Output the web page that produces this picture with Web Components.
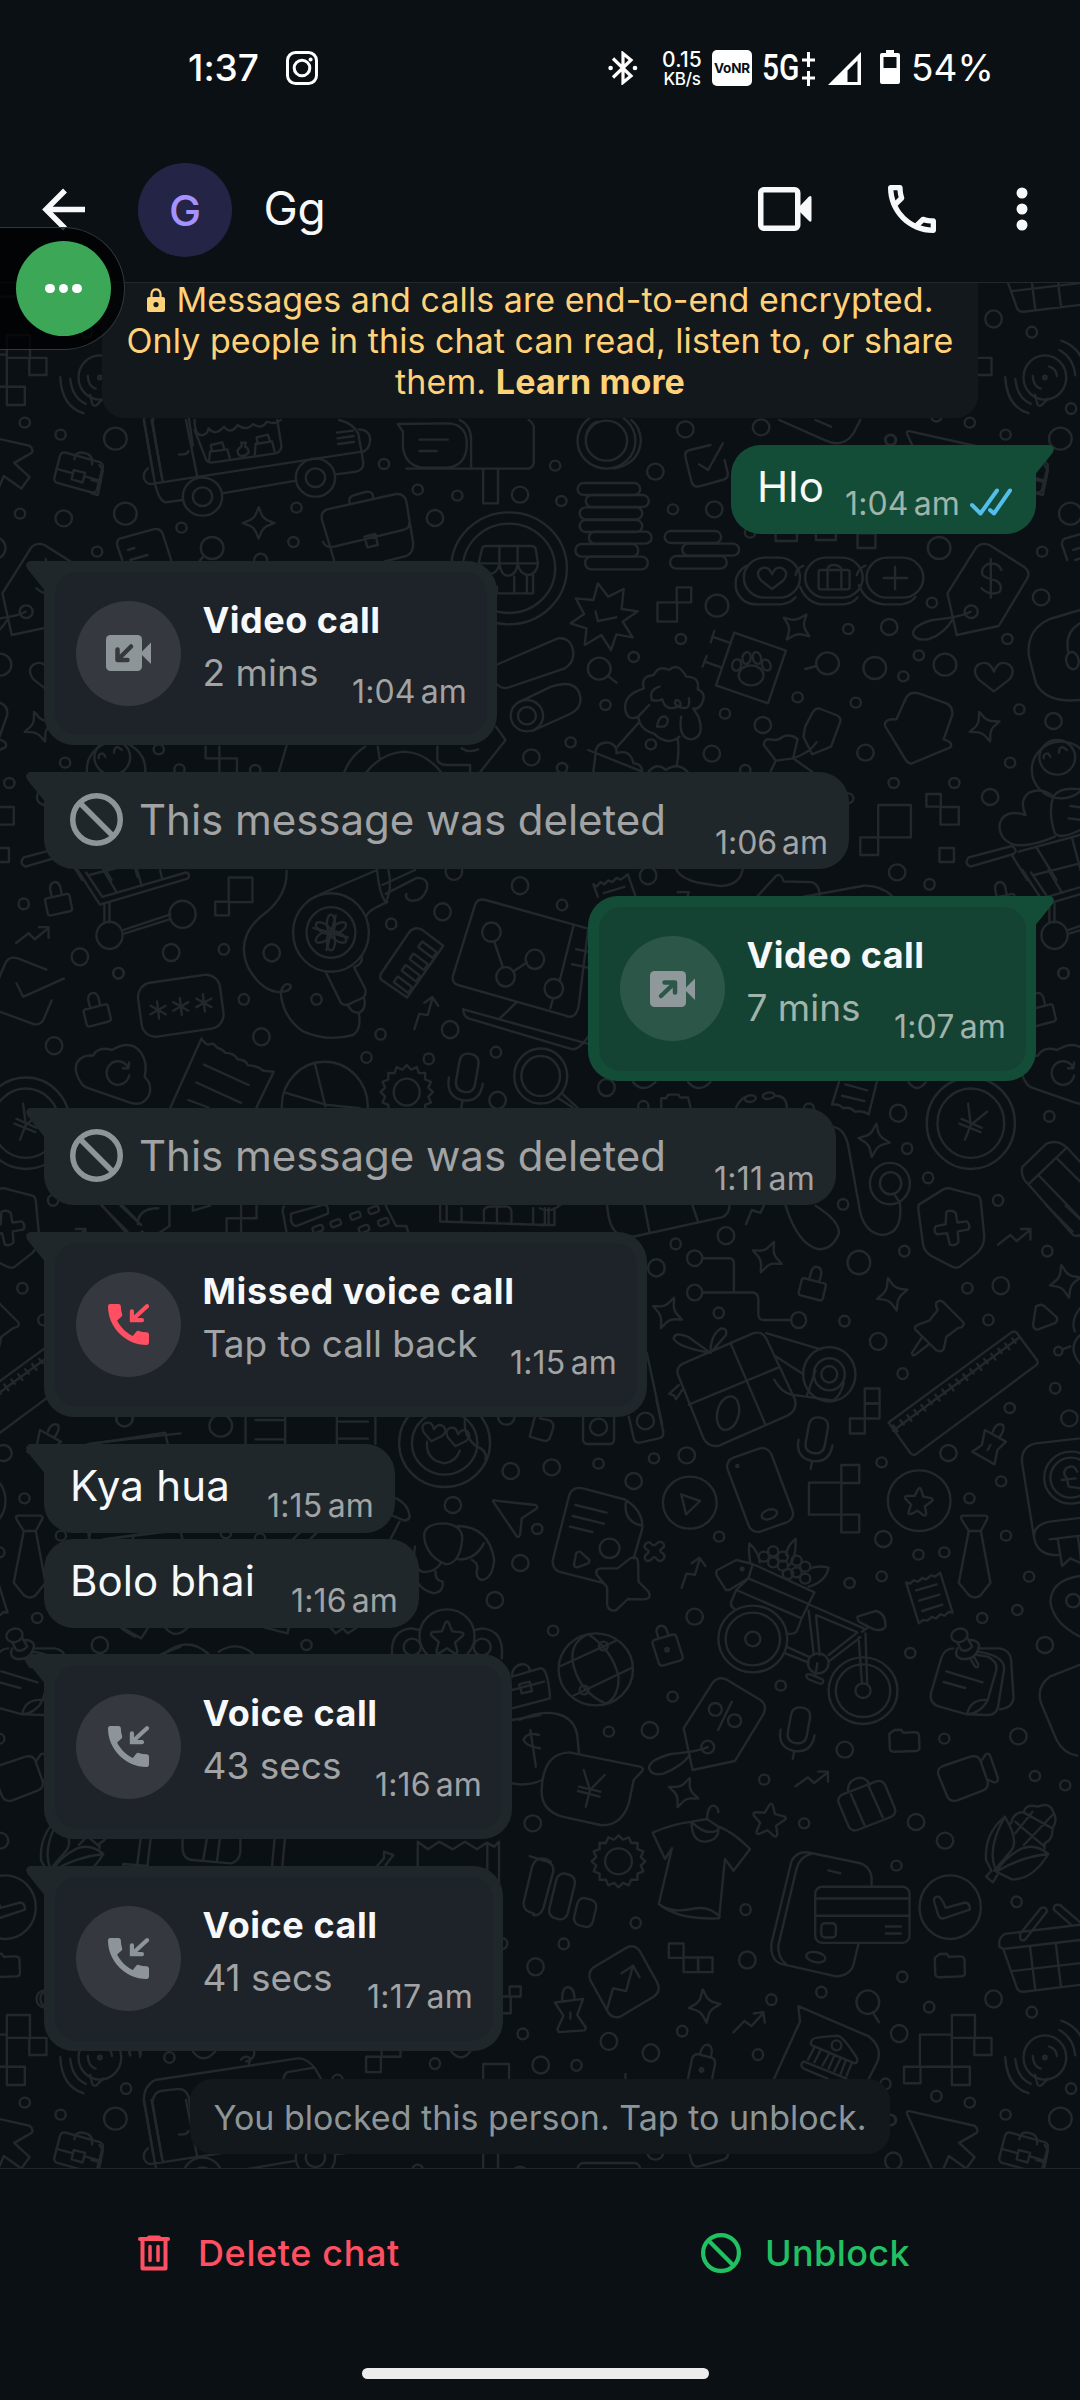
<!DOCTYPE html>
<html lang="en">
<head>
<meta charset="utf-8">
<title>Gg</title>
<style>
html,body{margin:0;padding:0;background:#0b1014}
body{width:1080px;height:2400px;overflow:hidden;font-family:Inter,"Liberation Sans",sans-serif;color:#f7f8fa}
</style>
</head>
<body>
<chat-app></chat-app>
<script>
const SHEET = (css, html) => `<style>:host{box-sizing:border-box}*{box-sizing:border-box}svg{display:block;flex:none}${css}</style>${html}`;
class Base extends HTMLElement {
  connectedCallback() {
    if (this.shadowRoot) return;
    this.attachShadow({mode: 'open'}).innerHTML = this.render();
  }
  a(n, d = '') { return this.getAttribute(n) ?? d; }
}

/* ---------- doodle wallpaper ---------- */
const circles = (r, ...p) => { let s = ''; for (let i = 0; i < p.length; i += 2) s += `<circle cx="${p[i]}" cy="${p[i+1]}" r="${r}"/>`; return s; };
const rects = (...list) => list.map(([x, y, w, h, r = 0]) => `<rect x="${x}" y="${y}" width="${w}" height="${h}" rx="${r}"/>`).join('');
const tilted = (cx, cy, w, h, rx, deg) => `<rect x="${cx - w/2}" y="${cy - h/2}" width="${w}" height="${h}" rx="${rx}" transform="rotate(${deg} ${cx} ${cy})"/>`;
const P = d => `<path d="${d}"/>`;
const oval = (x, y, a, b, deg = 0) => `<ellipse cx="${x}" cy="${y}" rx="${a}" ry="${b}" transform="rotate(${deg} ${x} ${y})"/>`;
const at = (x, y, deg, d) => `<path transform="translate(${x} ${y}) rotate(${deg})" d="${d}"/>`;
const sparkle = (x, y, deg = 0) => at(x, y, deg, 'M0-47Q4-41 6-32Q12-12 34-5L46 0L34 5Q12 12 6 32L0 47L-6 32Q-12 12-34 5L-46 0L-34-5Q-12-12-6-32Z');
const star = (x, y, k = 1, deg = 0) => `<path transform="translate(${x} ${y}) rotate(${deg}) scale(${k})" d="M-5-43Q0-52 5-43L15-18L42-15Q52-12 45-4L23 16L30 40Q30 52 20 47L0 33L-22 47Q-33 50-30 38L-24 14L-45-5Q-50-15-40-16L-15-18Z"/>`;
const heart = (x, y, k = 1, deg = 0) => `<path transform="translate(${x} ${y}) rotate(${deg}) scale(${k})" d="M0 44L-44 9Q-66-20-44-37Q-14-52 0-15Q14-52 42-37Q66-20 44 9Z"/>`;
const lock = (x, y, deg) => at(x, y, deg, 'M-30-14H30Q36-14 36-8V28Q36 35 28 35H-28Q-36 35-36 28V-8Q-36-14-30-14M-15-14V-38Q-12-54 0-54Q12-54 15-38V-14');
const zig = (x, y, deg) => at(x, y, deg, 'M-48 22L-12-5L6 12L46-20M18-22H46V8');
const folder = (x, y) => at(x, y, -2, 'M-43-22L-28-33H-8L-2-24H30Q43-24 43-14V22Q43 32 33 32H-32Q-43 32-43 22Z');
const mic = (x, y, deg) => at(x, y, deg, 'M-28-30Q-28-58 0-58Q28-58 28-30V22Q28 50 0 50Q-28 50-28 22ZM-50 18Q-50 72 0 74Q50 72 50 18M0 74V98');
const gear = (x, y, r) => { let d = ''; const n = 32; for (let i = 0; i <= n; i++) { const t = i / n * Math.PI * 2, q = i % 2 ? r - 6 : r + 6; d += (i ? 'L' : 'M') + (x + Math.cos(t) * q).toFixed(1) + ' ' + (y + Math.sin(t) * q).toFixed(1); } return P(d + 'Z') + circles(r * .54, x, y); };
const ticks = () => { let d = ''; for (let i = 0; i < 18; i++) { const x = 1026 + i * 20.3, y = 1583 - i * 14.3; d += `M${x} ${y}l${i % 2 ? '10 12' : '12 16'}`; } return d; };
const area = (x, y, ky, body) => `<g transform="translate(${x} ${y}) scale(.34439 ${1 / ky})">${body}</g>`;

const TILE =
area(0, 420, 3,
  circles(15, 1115,132, 861,263, 1213,209, 1328,227, 527,323, 852,366, 461,988, 521,1048, 741,1050) +
  circles(24, 1263,294, 1510,224, 1543,1012) + circles(33, 616,384) + circles(19, 757,420) +
  circles(57, 588,230, 916,173) + circles(28, 588,230, 916,173) + circles(168, 1478,445) + circles(134, 1478,445) +
  circles(26, 1530,887) + circles(47, 1530,887) + sparkle(751,309) +
  P('M418 0L450 190Q460 240 480 247L530 240M440 0L473 187M540 0L573 172M450 190L1050 95M645 220L860 182M975 163L1035 155Q1055 150 1055 130L1050 95L1040 40Q1025 10 985 0M565 30L597 115Q600 130 620 127L800 100Q818 95 817 75L805 0M565 0Q565 50 590 45Q605 40 605 25Q625 50 650 20Q670 45 690 15Q715 35 735 12Q760 30 775 5Q800 15 815 0M978 38L1025 32M980 55L1027 48M982 72L1027 66M1042 28Q1075 30 1075 60Q1073 90 1050 97M520 103Q545 105 547 93M430 145Q412 160 420 180Q430 197 448 190M607 122L610 95L660 88L667 113M615 92L612 75L645 67L652 88M740 103L742 72L790 64L797 93M748 70L745 52L778 44L784 64M700 68L714 68M702 70Q704 80 694 85Q685 95 695 106Q710 112 722 98Q722 85 712 80L712 70') +
  P('M935 300Q930 275 950 268L1150 222Q1175 220 1180 245L1200 370Q1200 400 1180 408L1115 425M935 300L970 420M938 365Q945 385 970 380L1170 330Q1190 325 1188 310M1015 250Q1010 230 1030 225L1065 215Q1085 215 1083 232M1058 350L1090 342L1097 375L1067 382Z') +
  P('M1155 12L1305 10Q1350 15 1355 60Q1360 135 1300 143L1225 143Q1175 135 1170 80L1170 35ZM1335 0Q1368 15 1368 60V143M1180 146H1535Q1550 140 1550 125V20Q1545 5 1535 0M1403 146V250H1446V146M1218 59H1300M1218 93H1268M590 410L580 422') +
  P('M1390 430L1400 385Q1402 378 1412 378H1545Q1556 380 1556 390L1562 430ZM1450 378V430M1503 378V430M1390 430Q1400 465 1420 462Q1445 462 1450 430Q1455 467 1475 467Q1500 465 1503 430Q1510 465 1535 465Q1560 460 1562 430M1443 500V520H1548V465M1493 470V520M1530 470V520') +
  P('M1440 735L1620 655Q1660 650 1665 700Q1665 730 1640 745L1475 803Q1455 808 1440 790M1510 845L1600 800Q1675 775 1685 830Q1690 865 1655 882L1545 933M597 980V1015H688V1055M637 980V1055M832 978L810 1055M1000 1055Q1020 1005 1060 980M1065 1055Q1110 998 1175 995Q1235 998 1280 1055M1270 980V1020Q1275 1035 1300 1035H1365V1055M1440 920L1468 960L1395 1055M1340 985Q1360 1000 1388 988M1097 980L1102 1015')) +
area(945, 420, 3,
  circles(24, 185,295) + circles(33, 364,281) + circles(15, 58,281, 176,44, 72,8) +
  P('M340 375Q338 360 350 355L445 328Q465 323 472 340L497 420M340 375L355 420M372 390L390 384M378 420L428 405')) +
area(540, 420, 3,
  circles(33, 1511,56, 1159,384, 514,557, 835,730, 972,744, 1176,734, 172,746) +
  circles(24, 422,28, 642,22, 335,155, 506,268, 1455,532, 1014,621, 647,915, 945,998, 499,1001, 1491,903, 1307,1131, 1037,1357) +
  circles(15, 1017,60, 44,137, 62,243, 386,268, 610,338, 1458,395, 1138,548, 895,627, 409,657, 272,711, 1100,706, 1357,657, 1055,769, 748,832, 917,848, 190,855, 537,881, 89,967, 1392,868, 64,1044, 596,1050, 1365,1028, 1027,1089, 1203,1089, 322,973, 895,1135) +
  circles(60, 193,62) + circles(84, 193,62) + P('M215 146Q290 130 293 60Q290 20 265 0M133 50Q140 15 165 5') +
  rects([109,189,182,36,18],[133,225,183,36,18],[115,262,182,36,18],[115,300,182,36,18],[142,335,182,36,18],[103,372,182,38,18],[131,410,182,38,18],[362,333,164,36,18],[413,371,165,36,18],[378,408,164,38,18]) +
  P('M495 75L435 90Q418 95 422 110L440 185Q445 203 462 199L530 180Q548 175 545 158L536 120M462 133L488 150L531 70') +
  P('M168 490L198 530L243 507L237 567L284 574L240 605L269 652L222 643L206 690L178 645L130 675L135 625L89 610L128 582L104 535L155 540ZM161 574L168 603L221 592') +
  rects([397,502,42,45],[341,547,57,58],[592,413,163,120,60],[770,413,167,120,60],[948,413,165,120,60],[809,450,90,58,6],[982,1155,95,97],[930,1252,52,53],[1122,1122,42,38],[1163,1161,53,53],[1160,1284,42,42],[684,318,62,45],[801,318,58,42],[922,340,52,44]) +
  P('M600 437Q560 460 570 510Q585 553 630 553H700Q728 550 742 532M755 500Q775 550 820 553H880Q910 550 922 532M926 495Q945 548 1000 553H1050Q1080 548 1090 530M835 450V508M875 450V508M835 450Q835 435 853 435Q873 435 875 450M1031 440V508M998 474H1066M742 465Q745 445 765 437M920 465Q925 445 945 437') + heart(674,474,.75) +
  P('M1183 520L1265 385Q1280 365 1305 375L1405 440Q1425 455 1415 475L1332 618L1210 645ZM1250 575Q1225 590 1140 600Q1085 615 1083 640Q1090 665 1130 657Q1175 640 1198 598M1340 450Q1330 425 1300 432Q1278 445 1285 465Q1295 475 1325 482Q1345 495 1335 515Q1310 530 1282 505M1309 417V533') + circles(19, 1252,575) +
  P('M564 638L714 692L662 850L511 796ZM550 668L500 650M506 633L496 667M526 742L478 725M484 708L472 740') + oval(613,766,36,30) + oval(571,735,13,17,15) + oval(600,714,12,18,10) + oval(630,714,12,18,-15) + oval(657,735,12,17,-25) +
  sparkle(745,621,37) + sparkle(1291,920,-20) + heart(1318,770,1) +
  P('M1060 840Q1070 812 1100 820L1180 850Q1200 860 1197 885L1172 958Q1200 965 1192 982L1080 1030Q1070 1033 1062 1020L1002 918Q998 895 1035 898Z') +
  P('M302 805Q290 770 330 765Q345 735 375 750Q400 725 425 770Q465 770 458 808Q485 820 470 850Q460 870 445 865L460 890Q480 950 440 958Q400 955 410 890M302 805Q240 825 248 870Q255 905 285 890L317 855M285 890Q290 930 330 940Q370 980 405 950M347 800Q315 810 325 840Q340 845 355 838Q365 875 400 860Q440 875 432 835M408 860Q385 855 395 840Q410 840 408 860M285 910L225 980M400 955Q405 1000 397 1035M340 920Q345 885 365 890Q380 905 360 920Z') +
  P('M140 990L297 1055M162 995L155 1056M162 990Q170 965 200 968Q225 975 222 1000Q260 985 272 1030Q295 1030 297 1055M315 1055Q340 1025 365 1050Q400 1025 428 1055') +
  P('M770 920L790 880Q800 860 815 867L860 885Q878 893 870 910L845 980L790 1003L765 950ZM685 1022L650 975Q650 955 670 958Q690 965 705 950Q730 940 748 958L735 1015L685 1022L670 1053M735 1015L790 1055M735 1015Q780 1000 803 967') +
  P('M200 770L222 788M803 738L770 747M1568 570L1480 597Q1410 630 1420 710L1440 790Q1470 850 1568 840M1568 610Q1520 640 1535 700') + oval(1546,722,18,26,-10) +
  circles(85, 1513,1050) + circles(52, 1502,1012) + P('M1463 1015Q1460 1000 1475 1000L1482 1010M1507 998Q1507 980 1520 982L1530 990') +
  P('M1380 1275Q1330 1260 1335 1210Q1350 1165 1410 1185Q1390 1140 1420 1118Q1460 1100 1490 1130Q1510 1100 1568 1108M1490 1130Q1475 1180 1495 1240Q1510 1260 1568 1230M1380 1275Q1430 1280 1495 1250M1540 1158L1575 1163M1535 1195L1575 1200') +
  P('M1245 1312L1370 1278Q1390 1290 1375 1302L1250 1340Q1230 1330 1245 1312ZM1370 1305L1415 1380M1390 1295L1568 1245M1440 1280L1500 1380M1545 1255L1575 1370M1435 1365L1568 1330') +
  P('M695 0L830 62Q880 85 910 40L930 0M800 0L845 20M1465 135L1475 150L1460 225L1442 220M1442 180L1468 187')) +
area(945, 860, 2.8,
  P('M225 28L290 125L545 52Q555 40 540 35L297 103L250 35M303 120V175M318 118V175M355 197L495 152M358 207L497 165M300 28L340 92M398 28L412 73M465 28L470 50') + circles(38, 318,211, 530,152) +
  lock(168,115,-12) + lock(280,425,-14) + zig(95,210,0) +
  circles(15, 69,123, 344,317) + circles(24, 232,271, 157,520, 497,259) +
  tilted(525,408,240,152,40,-8) + [[459,420],[525,410],[592,400]].map(([x, y]) => at(x, y, 0, 'M-3-24L3 24M-22-12L22 12M-22 12L22-12')).join('') +
  P('M135 307L50 275Q25 268 15 290L-20 370Q-30 405 0 425L100 460Q120 462 127 445L150 393M48 345L67 383L185 332') +
  P('M240 630Q210 590 225 565Q240 545 270 548Q285 520 325 532Q380 500 410 540Q430 570 420 607Q445 630 432 660Q415 690 380 680L260 640Q248 637 240 630M375 603A33 33 0 1 1 370 578M375 567L373 583L357 583') +
  circles(128, 75,737) + circles(97, 75,737) + P('M67 682L75 742L122 705M75 742L58 783M42 738L103 762M48 725L107 750') +
  P('M295 968L370 1040M350 968L410 1022M492 968V1025L465 1042M400 1020Q400 975 460 975')) +
area(0, 860, 2.8,
  P('M495 692L585 500Q595 515 605 517Q620 510 630 525Q645 530 655 540Q680 540 690 558Q715 560 720 575Q745 575 765 590L795 593L745 692M592 573L722 630M570 623L700 680M547 672L605 693') +
  rects([664,49,69,69],[625,117,40,38]) +
  P('M832 30Q835 95 775 145Q680 210 720 300Q760 370 815 370Q850 365 843 350Q825 340 815 370Q820 440 880 480Q950 510 1025 490Q1050 475 1042 430') +
  circles(110, 961,203) + circles(71, 961,203) + [0,60,120,180,240,300].map(t => `<ellipse cx="961" cy="178" rx="12" ry="25" transform="rotate(${t} 961 203)"/>`).join('') +
  P('M910 190L1010 217M948 252L975 155M925 98L1095 28M1065 155Q1070 140 1125 118M1095 28Q1100 90 1120 120Q1140 80 1128 28M945 312L990 400Q1000 410 1015 403L1055 385Q1065 375 1060 360L1028 300M1010 405Q1020 430 1045 427Q1065 415 1057 385M1030 300Q1055 290 1050 268M1110 70L1205 28M1120 95L1210 50Q1245 50 1240 80Q1225 120 1190 113Q1175 105 1180 95') +
  circles(24, 789,260, 1285,145, 759,495, 1307,475, 1510,72, 1445,673, 1318,32) +
  circles(15, 708,390, 919,390, 1136,179, 650,250, 1105,488, 1064,553, 1245,557, 1440,538) +
  P('M1105 320L1190 200Q1205 185 1225 195L1287 240L1182 385L1115 340Q1100 335 1105 320') + tilted(1170,349,52,20,2,36) + tilted(1193,317,52,20,2,36) + tilted(1216,285,52,20,2,36) + tilted(1241,251,52,20,2,36) +
  zig(1230,428,-35) +
  P('M1315 325L1378 130Q1385 105 1410 112L1708 192L1680 410Q1670 450 1640 435L1330 350Q1312 345 1315 325M1435 228L1460 300M1490 312L1530 287M1500 398L1450 445M1345 418L1708 515M1345 418Q1345 440 1365 445L1663 530Q1680 532 1708 495M1665 185L1626 335M1673 250L1710 257M1661 292L1710 302M1598 415L1606 387') + circles(27, 1427,202, 1468,327, 1553,278, 1608,360) +
  circles(125, 943,690) + P('M915 573L945 690M830 652L945 685L1045 695') + gear(1181,650,70) + mic(1356,600,10) + circles(77, 1570,605) + circles(56, 1570,605) + P('M1618 665L1663 693M1633 655L1676 693') +
  P('M825 970Q818 980 822 990L832 1042M845 990L940 965Q955 965 952 990L860 1025Q850 1025 845 1010ZM1120 968L1150 1025L1180 1025L1185 1042M745 968V1003H658V1042M700 968V1042M1278 968V1012L1582 1022V975M1297 968V1010M1340 975V1012M1405 1012V980Q1410 970 1425 970H1470Q1485 972 1485 985V1013M1443 975V1013M1548 975V1016M560 968V982L610 968') +
  [[1032,996],[1085,980],[975,1017],[1057,1033],[1113,1014],[923,1033]].map(([x, y]) => tilted(x,y,30,17,6,-20)).join('')) +
area(540, 860, 2.8,
  circles(24, 314,44, 193,637, 1040,709, 540,1052, 338,1142, 1338,1192, 982,1348) + circles(33, 926,1127) +
  circles(15, 64,126, 1131,68, 1520,317, 1479,718, 1066,808, 1127,890, 880,964, 1330,953, 394,1075, 1058,1095, 1473,1095, 519,1268, 884,1291, 1241,1199, 1302,1288, 1053,1438, 1496,1479, 300,690, 781,697) +
  P('M155 68L165 74L175 62L187 68L198 57L210 62L222 50L235 55L255 40L278 103M155 68L168 103M185 93L245 75M395 25Q410 55 470 65L525 73Q580 70 588 28M630 103L685 45Q700 35 708 60L790 62Q812 70 812 100M765 103L940 72Q990 70 1025 103M400 90H432L428 103') +
  P('M848 685L868 622M955 710L978 622M848 685Q870 682 880 695Q900 690 915 705Q935 700 955 712M887 628L950 645M877 660L942 675M352 692V667H366L372 657H402L407 665H430L437 692M570 692Q580 670 600 662M685 660Q715 660 717 692M270 622Q300 655 335 622M430 622Q460 655 495 622M1070 622Q1095 655 1120 622') + oval(611,668,16,9,-8) + oval(664,660,17,9,-8) +
  sparkle(970,785,8) + sparkle(660,1112,24) + sparkle(370,1268,24) + sparkle(1023,1216,-16) + sparkle(1525,1180,-14) +
  P('M855 748Q885 755 895 800L925 960Q935 1045 995 1050Q1055 1045 1045 960L1028 935M800 968Q870 1010 868 1045Q850 1090 810 1090Q750 1080 713 968') + circles(58, 1016,906) + circles(31, 1018,905) +
  P('M1100 965L1170 923Q1185 916 1200 922L1270 940Q1278 942 1280 955L1290 1055Q1290 1080 1270 1100L1220 1138Q1210 1145 1195 1138L1135 1108Q1115 1095 1112 1075L1098 975ZM1180 985Q1195 978 1207 988L1212 1015L1240 1012Q1252 1025 1243 1035L1213 1040L1215 1070Q1205 1082 1190 1077L1182 1045L1152 1048Q1140 1038 1150 1025L1178 1020Z') +
  zig(1378,1055,0) +
  P('M1400 860L1470 795Q1500 780 1530 805L1620 900M1418 908L1530 805M1400 860Q1395 890 1418 908L1548 1050Q1560 1058 1590 1040M1447 882L1575 1010M1500 835L1610 940') +
  circles(22, 449,1115, 449,1211, 751,1288) + P('M471 1115H550Q563 1115 563 1130V1211M471 1211H620Q634 1215 634 1230V1275Q636 1288 650 1288H729M598 1020L615 980L640 988L650 968M195 968Q200 1030 225 1045L270 1055L530 1000Q550 990 550 968M303 968L318 1042M443 968L458 1010M0 975Q30 990 60 965M25 975V1022H0M42 975V1022H25') + lock(793,1192,14) +
  P('M400 1440Q395 1420 415 1410L620 1325Q645 1318 657 1340L740 1510Q748 1540 720 1555L520 1640Q490 1645 475 1620ZM553 1352L655 1582M432 1525L695 1420M495 1380Q400 1365 388 1340Q390 1320 430 1335L495 1380L540 1330Q545 1310 525 1312Q495 1330 495 1380M657 1325L815 1370M775 1500L800 1430M685 1390L765 1440M680 1455Q700 1490 730 1497L850 1513Q870 1505 882 1465M403 1470L375 1495L390 1500L395 1510L412 1485M310 1380L355 1580') + oval(546,1549,31,48,15) + circles(76, 840,1440) + circles(45, 840,1440) + circles(23, 840,1440) +
  P('M1150 1240Q1160 1230 1170 1237L1230 1295Q1232 1310 1215 1310L1180 1335L1172 1370Q1165 1380 1150 1372L1090 1315Q1085 1305 1100 1300L1130 1290L1155 1260Q1148 1250 1150 1240M1110 1335L1080 1380Q1080 1390 1090 1385L1130 1355') +
  P('M1012 1575L1370 1322Q1380 1317 1385 1325L1443 1400Q1448 1410 1440 1415L1090 1665Q1083 1668 1075 1660ZM1025 1598L1392 1337' + ticks()) +
  P('M1440 1250Q1455 1240 1465 1250L1500 1280Q1505 1290 1495 1297L1445 1315Q1432 1315 1432 1300ZM1517 1370L1540 1362M1568 1255Q1540 1290 1553 1320M1568 1330Q1530 1365 1568 1410') + circles(12, 1505,1375) + rects([943,1480,43,42],[943,1522,43,42],[900,1564,43,42])) +
area(0, 1400, 3,
  circles(33, 641,77) + circles(24, 362,55, 1483,213, 1315,315, 1511,489, 1437,600, 1547,1270, 1470,50) + circles(15, 656,400, 755,415, 890,735, 1560,387) +
  P('M713 52V132M828 52V132M742 60H828M742 118H828M978 52V132M1090 52V132M978 65H1068M978 116H1068M265 132L480 98L487 132') +
  circles(132, 1291,129) + circles(95, 1291,129) + heart(1258,97,.62,12) + heart(1328,112,.62,12) + P('M1240 125Q1235 180 1290 190Q1325 185 1335 152M1350 60Q1345 110 1385 140Q1415 150 1410 180') +
  P('M1232 400Q1240 370 1290 370Q1345 375 1342 420Q1335 490 1295 493Q1240 470 1232 415ZM1330 378Q1420 380 1435 480Q1430 535 1400 540Q1380 535 1385 510Q1390 490 1370 480M1405 430Q1380 480 1330 478M1205 440Q1195 500 1225 515Q1260 520 1280 490M1265 515Q1262 540 1285 545Q1290 575 1260 580Q1225 570 1215 550') +
  P('M1432 305Q1430 298 1440 302L1555 315Q1565 320 1555 328L1515 355L1510 405Q1505 415 1500 408ZM1150 295Q1185 310 1190 350Q1185 365 1170 360L1135 345M1160 365L1135 415') +
  circles(80, 1298,708) + star(1298,712,1) + circles(25, 1197,741, 1400,741) + P('M1138 762Q1135 690 1195 685L1218 690M1457 775Q1465 690 1400 685L1378 690') +
  P('M1487 823Q1490 795 1520 792Q1540 800 1537 810M1487 830L1568 805Q1590 800 1597 890M1487 870L1580 845M1507 853L1538 845L1545 873L1515 880ZM1487 925L1597 895M1487 960L1568 945M1487 1150Q1530 1160 1575 1140M1565 1005Q1530 995 1520 1020Q1530 1040 1568 1045M1540 990L1556 1100M475 762Q545 705 605 762M635 755Q690 720 735 762M355 683L410 715L430 683M480 683Q510 720 545 683M770 683L835 700L838 683M960 683L975 700L995 685L1010 700L1035 683M262 398L258 418M525 398L530 418M300 418L440 398M850 418L870 398M900 418L920 398') +
  P('M408 1319L398 1398M437 1319L428 1398M530 1319V1345Q532 1378 560 1380L670 1390Q695 1385 698 1355V1319M600 1319L590 1380M638 1319L630 1386M797 1319L790 1398M827 1319L820 1398M358 1398V1392L430 1398M1095 1398L1115 1375V1355L1142 1365L1120 1395M1213 1398V1325L1243 1348L1275 1325L1315 1348L1350 1325L1385 1348L1413 1328L1435 1340L1449 1325V1450M1415 1330V1410M1600 1385Q1560 1360 1545 1400L1520 1510Q1520 1535 1550 1540')) +
area(540, 1400, 3,
  circles(78, 435,308) + circles(91, 1101,302) + star(1099,304,.85,5) + P('M410 283L465 303L424 343Z') +
  circles(24, 34,202, 426,166, 272,243, 1186,159, 1537,55, 997,417, 449,650, 319,990, 885,1049, 1389,1009, 1092,1266, 1176,1322, 1466,735) +
  circles(15, 170,191, 331,175, 992,187, 1339,244, 1247,295, 520,410, 1353,407, 1099,464, 1174,457, 899,549, 992,529, 1420,530, 1386,630, 1284,654, 38,692, 1075,759, 699,857, 385,890, 200,995, 1174,1016, 651,1139, 767,1270, 1035,1397, 1437,1128, 1525,1156, 1364,24) +
  P('M125 50V120Q127 132 140 132H205Q215 130 215 118V50M258 50L272 115Q275 130 290 128L345 115Q360 112 358 95L338 0M0 55L30 62Q42 70 38 85L28 115Q22 125 10 122L-30 110L-15 50') + circles(25, 170,81, 306,63) +
  P('M37 480L85 285Q95 258 125 265L245 298Q300 330 297 385L272 475M37 480Q35 505 55 515L180 548M250 302Q240 365 297 377M103 315L193 338M95 348L185 371M87 380L152 396M105 460Q115 450 122 460L143 480Q145 488 135 492L108 502Q98 502 99 492ZM262 475Q285 465 285 490L286 545L315 575Q325 598 300 598L255 597L222 630Q200 637 195 615V562L165 525Q158 505 180 505L225 505Z') + circles(29, 202,445) +
  at(332,454,0,'M-27-20Q-18-33-8-22Q0-14 8-24Q20-34 27-22Q31-12 20-7Q12 0 25 6Q34 16 24 26Q14 33 6 22Q0 12-8 24Q-20 34-26 24Q-32 14-20 7Q-12 0-22-5Q-32-12-27-20') +
  tilted(639,270,135,235,28,-20) + oval(666,343,23,14,-20) + circles(3, 573,198) +
  P('M1228 347H1294Q1302 350 1298 358L1280 393H1245L1224 358Q1220 348 1228 347M1245 393L1216 548L1245 585Q1263 600 1280 585L1308 548L1280 393') +
  rects([781,248,94,96],[875,195,52,54],[875,344,52,53]) + mic(803,110,10) + mic(751,980,10) +
  P('M1292 90L1353 125L1328 150L1320 193L1255 155L1283 135ZM1315 95Q1325 65 1345 75Q1350 90 1335 110M1308 135L1300 150') +
  P('M1700 100L1440 130Q1395 140 1400 190L1435 415Q1445 470 1510 465M1435 415Q1430 375 1480 365L1710 335M1480 418L1700 390M1503 415L1516 498L1540 475L1572 490L1562 410M1560 215Q1550 190 1528 205Q1515 220 1530 235L1535 260L1568 265M1515 240L1555 235') + circles(78, 1542,233) + circles(60, 1542,233) +
  zig(438,518,-35) + zig(790,1137,0) +
  circles(100, 618,717, 938,872) + circles(79, 618,717, 938,872) + circles(22, 618,717, 938,872) + circles(30, 808,790) +
  P('M780 632L795 765M802 650L812 765M802 645L922 697L838 765M785 615L940 685M925 712L935 850M945 700L950 850M838 785L930 712M715 740L780 770M712 760L780 788M922 650L975 633Q1005 640 1003 680Q995 695 970 688L930 668Q920 660 922 650M935 695L955 680M618 492L797 577L760 655L570 570L605 535ZM605 535L780 612M760 655L745 695Q735 705 715 700M570 570L555 605Q552 620 565 627M618 492L570 480L515 510Q508 520 515 530L540 570L550 570L605 535M610 485Q605 450 608 430Q635 455 638 488M715 465Q715 440 742 417Q745 470 725 495M785 505Q810 495 838 503Q830 545 780 560M805 790L800 825M775 823Q770 835 785 840L815 852Q827 848 820 838L785 823Z') +
  circles(15, 650,470, 677,454, 705,470, 677,487, 705,497, 745,482, 770,500, 745,517, 770,536, 720,522) + circles(4, 587,507) +
  P('M1063 547L1075 551L1085 541L1098 545L1110 534L1122 538L1135 526L1147 530L1162 518L1198 638L1186 636L1175 647L1162 643L1150 655L1137 651L1125 662L1112 660L1100 670ZM1092 571L1152 553M1101 602L1160 584M1110 633L1168 614') +
  circles(108, 162,808) + P('M60 798L222 722M95 888L268 803M140 702Q80 730 98 800Q120 880 190 910M140 702Q210 750 228 830Q230 890 190 912') + circles(13, 184,738, 128,870) +
  at(369,745,-17,'M-25-35H25Q36-35 36-25V35Q36 46 25 46H-25Q-36 46-36 35V-25Q-36-35-25-35M-15-35V-55Q-12-70 0-70Q12-70 15-55V-35') + circles(5, 369,749) +
  P('M1135 880L1165 775Q1175 745 1200 745M1270 765L1300 770Q1330 785 1325 810L1300 900Q1280 940 1240 943L1160 920Q1130 910 1135 880M1275 745H1335Q1365 750 1368 780L1375 895Q1370 925 1335 928M1270 755Q1345 765 1348 805L1330 920Q1325 945 1300 945L1240 943M1240 943Q1250 895 1300 900M1180 814L1285 847M1172 846L1235 864M1212 728L1222 748Q1235 760 1255 740L1240 712M1212 745Q1200 770 1225 777Q1270 780 1275 735Q1270 720 1248 720M1250 777L1263 800Q1275 805 1272 792L1260 770') + oval(1218,706,24,20,-20) +
  P('M417 985L500 850Q515 828 540 838L640 900Q660 915 650 940L566 1083L443 1110ZM557 905L517 990M487 1041Q460 1055 380 1062Q315 1080 317 1105Q325 1130 360 1120Q410 1100 435 1065') + circles(19, 487,1041, 509,928, 565,962) +
  star(665,1258,1,8) + sparkle(417,1178,22) +
  P('M5 1165Q10 1060 85 1057L290 1100Q305 1105 295 1115L272 1140L258 1210Q235 1280 175 1275L65 1250Q0 1230 5 1165M127 1110L145 1170L188 1125M145 1170L133 1220M113 1160L175 1175M110 1173L173 1190M-60 960Q0 930 50 942Q100 955 108 1005L113 1057') +
  tilted(949,1217,145,115,20,-22) + P('M903 1183L942 1275M955 1160L995 1252M895 1175Q890 1140 930 1133Q950 1135 957 1155') + folder(1058,1022) +
  P('M1157 1125Q1152 1105 1170 1098L1250 1070Q1270 1065 1278 1080L1300 1145Q1303 1165 1285 1172L1210 1202Q1190 1205 1183 1190ZM1280 1085L1295 1062Q1305 1058 1308 1070L1330 1135Q1330 1148 1318 1147L1302 1140') +
  P('M1350 1250Q1290 1300 1295 1380L1310 1410M1350 1250Q1390 1320 1370 1350L1318 1412M1350 1250Q1300 1340 1320 1400M1476 1362Q1440 1330 1400 1345Q1350 1370 1325 1415M1476 1362Q1430 1440 1370 1438L1325 1415M1476 1362Q1400 1370 1330 1412M1310 1413L1295 1430L1315 1447L1328 1425M1368 1270Q1375 1235 1405 1237Q1410 1210 1445 1220Q1480 1205 1490 1235Q1505 1260 1488 1285Q1490 1320 1465 1330V1345M1380 1300L1430 1235M1405 1335L1488 1245M1380 1265L1465 1340M1405 1238L1488 1285') +
  P('M1700 560Q1640 520 1568 528Q1485 540 1482 605Q1490 670 1568 710M1700 740L1480 830Q1440 860 1455 910L1500 1020Q1520 1060 1560 1067') + circles(20, 1548,602) +
  gear(228,1384,72) +
  P('M327 1298Q390 1270 445 1265M327 1298L363 1377L383 1345L345 1512Q400 1560 520 1555L537 1377L562 1412L610 1347Q560 1295 515 1278M345 1512Q380 1540 440 1527Q490 1515 522 1550M440 1265Q440 1325 480 1325Q520 1320 518 1285M440 1265Q480 1310 518 1290M440 1265L485 1257L518 1280M485 1257Q487 1215 505 1217Q518 1222 518 1237')) +
area(0, 1840, 2.8,
  P('M418 735Q415 690 450 672L860 612Q890 608 915 640L932 668M443 735Q445 705 470 702L520 697Q540 697 548 720L560 800M418 730L445 880M443 735L470 890M823 668Q825 655 835 650L908 638M1163 592V607H1108V592M1460 438H1483V485H1460M1310 592Q1340 625 1365 592M375 592L378 603M405 592L407 607M560 592Q590 630 625 592M700 615Q710 600 728 612L722 628M738 592V600Q735 615 715 620') + circles(15, 492,609, 1518,543, 1263,626, 980,672, 1458,290) + circles(24, 1555,355, 130,445) + rects([1063,607,43,43],[1403,627,75,60],[1480,410,32,28])) +
area(540, 1840, 2.8,
  P('M-30 45L25 62Q42 70 38 90L10 190Q0 215-20 210') + tilted(64,158,55,128,22,14) + tilted(131,203,56,78,20,14) +
  circles(15, 69,291, 278,232, 597,195, 672,447, 413,535, 106,631, 633,601, 817,426, 1052,383, 1130,468, 1384,173, 1428,482, 1151,717, 1542,696, 1003,683, 1019,784) +
  circles(24, 602,336, 200,564, 322,596, 1043,542, 1317,445, 2,630, 1026,899) + circles(33, 952,454) + P('M966 482L984 510') +
  tilted(244,397,165,158,28,-30) + P('M195 473L212 415L250 423L270 352M237 373L270 352L289 384M43 455L125 445L108 490L133 525L130 533L55 538L50 530L68 492ZM65 450Q62 415 80 412Q100 412 100 445M88 483V500M248 655V668') +
  rects([374,290,43,40],[417,329,42,41],[459,329,42,41],[799,131,274,157,20],[817,233,42,40,10],[1103,545,93,90],[1196,490,67,64],[1261,554,50,48],[1057,635,48,46],[1196,635,52,51]) + sparkle(478,465,-7) + zig(606,510,-8) +
  P('M430 668L442 610Q448 598 460 600L500 610Q510 615 508 628L500 668M465 600Q470 572 488 573Q505 580 496 608') + circles(5, 469,644) +
  P('M730 60Q745 30 780 35L930 65Q970 80 962 130M730 60L672 290Q668 335 700 347L860 382Q900 380 910 350L925 290M745 80Q755 45 790 38M745 80L692 295Q690 330 715 348M799 164H1073M799 212H1073M1004 242H1048M1004 262H1048M837 85L872 93') + oval(801,328,28,14,10) +
  circles(89, 1191,188) + P('M1145 175Q1140 160 1155 158Q1165 158 1178 190L1235 175Q1250 178 1248 195L1170 220Q1160 220 1157 212Z') + folder(1190,351) +
  P('M1350 263Q1328 275 1335 300L1345 305L1385 415Q1390 425 1405 425L1700 390M1350 263L1700 222M1345 305L1700 265M1370 367L1700 330M1423 300L1438 418M1498 292L1513 412M1575 284L1590 400M1395 262L1455 190Q1470 185 1472 200L1408 280Q1390 285 1395 262M1545 240L1492 195Q1490 178 1510 182L1575 236') +
  P('M680 668L755 508L750 465L955 550Q995 580 980 620L955 668M790 560Q790 552 865 548Q880 550 920 610Q925 625 912 625L790 575Q783 570 790 560M797 580L778 615M815 588L797 622M840 597L820 632M855 603L838 640M873 611L855 647M888 617L873 655M905 625L890 660M765 620L890 668M765 620Q753 630 765 640L835 668') + circles(14, 861,575) +
  circles(62, 1466,609) + circles(5, 1466,609) + P('M1437 657L1445 685Q1450 692 1458 685L1475 668M1431 605Q1432 635 1454 640M1478 578Q1500 585 1501 605M1380 613Q1385 665 1425 683M1351 608Q1355 690 1418 709M1508 532Q1550 555 1554 603M1514 506Q1580 530 1585 600') +
  P('M1065 765Q1065 757 1075 760L1262 800Q1275 810 1268 820L1217 848L1262 888L1238 920L1187 885L1165 935Q1155 945 1145 935Z') +
  tilted(1404,875,128,88,12,15) + P('M1340 865L1386 877M1423 886L1463 897M1392 838Q1395 815 1420 820Q1448 825 1443 852M1390 868L1423 876L1416 903L1384 894Z'));

customElements.define('chat-wallpaper', class extends Base {
  render() {
    return SHEET(':host{display:block}svg{width:100%;height:100%}',
      `<svg viewBox="0 283 1080 1885" fill="none" stroke="#22282b" stroke-linecap="round" stroke-linejoin="round"><defs><g id="t">${TILE}</g></defs>
      <use href="#t"/><use href="#t" x="-945"/><use href="#t" y="1680"/><use href="#t" x="-945" y="1680"/><use href="#t" y="-1680"/><use href="#t" x="-945" y="-1680"/></svg>
      <style>svg path,svg circle,svg rect,svg ellipse{vector-effect:non-scaling-stroke;stroke-width:2.4px}</style>`);
  }
});

/* ---------- status bar ---------- */
customElements.define('status-bar', class extends Base {
  render() {
    return SHEET(`:host{display:flex;height:136px;align-items:center;padding:0 86px 0 188px;color:#fff;font-weight:500}
      .time{font-size:37px;line-height:44px;width:98px}
      .sp{flex:1}.net{display:flex;flex-direction:column;align-items:center;width:42px;margin:0 9px 0 23px}
      .net fit-text{display:block}.a{font-size:21px;line-height:21px}.b{font-size:17px;line-height:17px;margin-top:1px}
      .vo{width:40px;height:36px;border-radius:5px;background:#fff;color:#0b1014;font-size:13.5px;font-weight:700;display:flex;align-items:center;justify-content:center}
      .g{font:500 37px Roboto,sans-serif;line-height:44px;width:38px;margin-left:10px}
      .g span{display:block;transform:scaleX(.81);transform-origin:0 50%}
      .pct{font-size:37px;line-height:44px;font-weight:400;margin-left:11px}`,
      `<fit-text class="time" w="71">1:37</fit-text>
      <svg width="32" height="34" viewBox="0 0 32 34" fill="none" stroke="#fff" stroke-width="3"><rect x="1.5" y="1.5" width="29" height="31" rx="8"/><circle cx="16" cy="17" r="7.8"/><circle cx="24.6" cy="8.5" r="2" fill="#fff" stroke="none"/></svg>
      <span class="sp"></span>
      <svg width="30" height="34" viewBox="0 0 30 34" fill="none" stroke="#fff" stroke-width="3.2"><path d="M5 7.5L23 25L15 31.5V2.5L23 9L5 26.5"/><circle cx="2.6" cy="17" r="2.3" fill="#fff" stroke="none"/><circle cx="27" cy="17" r="2.3" fill="#fff" stroke="none"/></svg>
      <div class="net"><fit-text class="a" w="40">0.15</fit-text><fit-text class="b" w="37">KB/s</fit-text></div>
      <div class="vo"><fit-text w="36">VoNR</fit-text></div>
      <div class="g"><span>5G</span></div>
      <svg width="15" height="36" viewBox="0 0 15 36" stroke="#fff" stroke-width="3" style="margin-left:1px"><path d="M1 10H14M7.5 2V17M1 28H14M7.5 21V36"/></svg>
      <svg width="33" height="33" viewBox="0 0 33 33" style="margin-left:12px"><path fill="#fff" fill-rule="evenodd" d="M0 33L33 0V33ZM19.500 18.500V30H29.500V8.500Z"/></svg>
      <svg width="20" height="34" viewBox="0 0 20 34" style="margin:0 0 2px 19px"><path fill="#fff" fill-rule="evenodd" d="M6 0H14V3H18Q20 3 20 5V32Q20 34 18 34H2Q0 34 0 32V5Q0 3 2 3H6ZM3.500 7V18H16.500V7Z"/></svg>
      <fit-text class="pct" w="83">54%</fit-text>`);
  }
});

/* ---------- conversation header ---------- */
customElements.define('chat-header', class extends Base {
  render() {
    return SHEET(`:host{display:flex;height:147px;align-items:center;border-bottom:1px solid #22272b;padding:0 52px 0 42px}
      .av{width:94px;height:94px;border-radius:50%;background:#242447;color:#a791ff;font-size:43px;font-weight:500;display:flex;align-items:center;justify-content:center;margin:1px 0 0 53px}
      .name{font-size:46px;line-height:60px;margin:-3px 0 0 31.5px}.sp{flex:1}`,
      `<svg width="43" height="43" viewBox="0 0 43 43" fill="none" stroke="#f7f8fa" stroke-width="5.500"><path d="M43 21.500H5M23 2.500L4 21.500L23 40.500"/></svg>
      <div class="av"><span>G</span></div><fit-text class="name" w="62">Gg</fit-text><span class="sp"></span>
      <svg width="54" height="44" viewBox="0 0 54 44"><rect x="2.750" y="2.750" width="37" height="38.500" rx="3" fill="none" stroke="#f7f8fa" stroke-width="5.500"/><path fill="#f7f8fa" d="M41 20L51 9.500Q53.500 8 53.500 11V33Q53.500 36 51 34L41 24Z"/></svg>
      <svg width="48" height="48" viewBox="3 3 18 18" fill="#f7f8fa" style="margin:0 80px 0 76.500px"><path d="M6.540 5c.060.890.210 1.760.450 2.590l-1.200 1.200c-.410-1.200-.670-2.470-.760-3.790h1.510m9.860 12.020c.850.240 1.720.390 2.600.450v1.490c-1.320-.090-2.590-.350-3.800-.750l1.200-1.190M7.500 3H4c-.550 0-1 .450-1 1 0 9.390 7.610 17 17 17 .550 0 1-.450 1-1v-3.490c0-.550-.450-1-1-1-1.240 0-2.450-.200-3.570-.570-.100-.040-.210-.050-.310-.050-.260 0-.510.100-.710.290l-2.200 2.200c-2.830-1.450-5.150-3.760-6.590-6.590l2.200-2.200c.280-.280.360-.670.250-1.020C8.700 6.450 8.500 5.250 8.500 4c0-.550-.450-1-1-1z"/></svg>
      <svg width="12" height="44" viewBox="0 0 12 44" fill="#f7f8fa"><circle cx="6" cy="6" r="5.500"/><circle cx="6" cy="22" r="5.500"/><circle cx="6" cy="38" r="5.500"/></svg>`);
  }
});

customElements.define('assist-bubble', class extends Base {
  render() {
    return SHEET(`:host{position:absolute;left:0;top:227px;width:125px;height:123px;display:flex;align-items:center;padding-left:16px;background:rgba(0,0,0,.76);border:1px solid #34373a;border-left:0;border-radius:0 62px 62px 0}
      .c{width:95px;height:95px;border-radius:50%;background:#3ba757;display:flex;align-items:center;justify-content:center;gap:4px}i{width:9.600px;height:9.600px;border-radius:50%;background:#fff}`,
      `<div class="c"><i></i><i></i><i></i></div>`);
  }
});

/* ---------- message bubbles ---------- */
const ICON = {
  phone: c => `<svg width="41" height="41" viewBox="3 3 18 18" fill="${c}"><path d="M20.010 15.380c-1.230 0-2.420-.200-3.530-.560-.350-.120-.740-.030-1.010.240l-1.570 1.970c-2.830-1.350-5.480-3.900-6.890-6.830l1.950-1.660c.270-.280.350-.670.240-1.020-.370-1.110-.560-2.300-.560-3.530 0-.540-.450-.990-.990-.990H4.190C3.650 3 3 3.240 3 3.990 3 13.280 10.730 21 20.010 21c.710 0 .990-.630.990-1.180v-3.450c0-.540-.450-.990-.990-.990z"/><path d="M20.100 4L13.800 9.800M13.500 6.200V10.100H17.900" fill="none" stroke="${c}" stroke-width="1.850" stroke-linecap="round"/></svg>`,
  video: (c, bg, out) => `<svg width="46" height="36" viewBox="0 0 46 36"><rect width="36" height="36" rx="4.500" fill="${c}"/><path fill="${c}" d="M36 16.500L45 7.500V29L36 20Z"/><path d="${out ? 'M11 25L24 12.500M14.500 11.500H25V21.500' : 'M25 11.500L12.500 24M11.500 14.500V25H21.500'}" fill="none" stroke="${bg}" stroke-width="4.500" stroke-linecap="round" stroke-linejoin="round"/></svg>`,
  ban: (s, c, w) => `<svg width="${s}" height="${s}" viewBox="0 0 ${s} ${s}" fill="none" stroke="${c}" stroke-width="${w}"><circle cx="${s/2}" cy="${s/2}" r="${(s-w)/2}"/><path d="M${s*.17} ${s*.17}L${s*.83} ${s*.83}"/></svg>`
};
const shell = `:host{display:flex;position:relative;border-radius:30px;background:var(--b)}
  :host([side=out]){--b:#144d37;--in:#154333;--c:#2c5748;--sub:#a1b4ab;align-self:flex-end;margin-right:44px}
  :host([side=in]){--b:#20272a;--in:#1d2329;--c:#35383f;--sub:#a1a3a4;align-self:flex-start;margin-left:44px}
  :host([side=out]:not([plain])){border-top-right-radius:0}:host([side=in]:not([plain])){border-top-left-radius:0}
  .tail{position:absolute;top:0}:host([side=out]) .tail{right:-18px}:host([side=in]) .tail{left:-18px;transform:scaleX(-1)}
  :host([plain]) .tail{display:none}.tail path{fill:var(--b)}
  .time{font-size:32px;line-height:40px;color:var(--sub);word-spacing:-4px}.sp{flex:1}`;
const tail = `<svg class="tail" width="19" height="30" viewBox="0 0 19 30"><path d="M0 0H15Q21 2 17.500 8L1 28.500L0 29Z"/></svg>`;

customElements.define('text-message', class extends Base {
  render() {
    const h = this.a('h', '89'), tb = this.a('tb', '7');
    return SHEET(shell + `:host{width:${this.a('width')}px;height:${h}px;padding:0 21px 0 26px}
      :host([read]){padding-right:24px}
      .body{font-size:42px;line-height:${h - 5.5}px}:host([deleted]) .body{line-height:${h - 2}px;color:var(--sub);margin-left:16px}
      .ban{align-self:center;margin-top:-3px}.time{align-self:flex-end;margin-bottom:${tb}px}.ticks{align-self:flex-end;margin:0 0 18px 10px}`,
      `${tail}${this.hasAttribute('deleted') ? `<div class="ban">${ICON.ban(53, '#8d9598', 5.5)}</div>` : ''}
      <fit-text class="body" w="${this.a('tw')}">${this.a('text')}</fit-text><span class="sp"></span><fit-text class="time" w="${this.a('mw')}">${this.a('time')}</fit-text>
      ${this.hasAttribute('read') ? `<svg class="ticks" width="42" height="28" viewBox="0 0 42 28" fill="none" stroke="#53bdeb" stroke-width="4" stroke-linecap="round" stroke-linejoin="round"><path d="M2 17L10.500 25.500L27 2.500M20 22L24 25.500L40 2.500"/></svg>` : ''}`);
  }
});

customElements.define('call-message', class extends Base {
  render() {
    const out = this.a('side') === 'out', grey = out ? '#8f989b' : '#8d9598';
    const icon = this.a('kind') === 'video' ? ICON.video(grey, out ? '#2c5748' : '#35383f', out) : ICON.phone(this.hasAttribute('missed') ? '#ff5063' : grey);
    return SHEET(shell + `:host{width:${this.a('width')}px;height:${this.a('h', '185')}px;padding:10.5px}
      .card{flex:1;min-width:0;display:flex;background:var(--in);border-radius:22px;padding:0 19.5px 0 21.5px}
      .c{width:105px;height:105px;flex:none;border-radius:50%;background:var(--c);display:flex;align-items:center;justify-content:center;align-self:center}
      .t{flex:1;min-width:0;display:flex;flex-direction:column;padding:22.500px 0 0 21.500px}.h{font-size:36px;font-weight:700;line-height:52px}
      .row{display:flex;align-items:flex-start}.s{font-size:37px;line-height:53px;color:var(--sub)}
      .time{margin-top:26px}`,
      `${tail}<div class="card"><div class="c">${icon}</div><div class="t"><fit-text class="h" w="${this.a('hw')}">${this.a('text')}</fit-text>
      <div class="row"><fit-text class="s" w="${this.a('sw')}">${this.a('sub')}</fit-text><span class="sp"></span><fit-text class="time" w="${this.a('mw')}">${this.a('time')}</fit-text></div></div></div>`);
  }
});

customElements.define('encryption-notice', class extends Base {
  render() {
    return SHEET(`:host{display:flex;flex-direction:column;align-items:center;align-self:center;width:876px;height:135px;background:#12181b;border-radius:0 0 22px 22px;color:#ffd279;font-size:34px;line-height:41px}
      div{display:flex;white-space:pre}.first{line-height:33px;height:37px}svg{margin:5px 12px 0 0}b{font-weight:700}`,
      `<div class="first"><svg width="18" height="24" viewBox="0 0 18 24"><path fill="#ffd279" fill-rule="evenodd" d="M2 9H16Q18 9 18 11V22Q18 24 16 24H2Q0 24 0 22V11Q0 9 2 9ZM9 14A2.600 2.600 0 1 0 9 19.200A2.600 2.600 0 1 0 9 14Z"/><path d="M4.500 10V6Q5 1.300 9 1.300Q13 1.300 13.500 6V10" fill="none" stroke="#ffd279" stroke-width="2.200"/></svg><fit-text w="757">Messages and calls are end-to-end encrypted.</fit-text></div>
      <div><fit-text w="827">Only people in this chat can read, listen to, or share</fit-text></div>
      <div><fit-text w="290">them. <b>Learn more</b></fit-text></div>`);
  }
});

customElements.define('system-note', class extends Base {
  render() {
    return SHEET(`:host{display:flex;align-self:center;width:700px;height:75px;margin-top:28px;border-radius:22px;background:#12181b;color:#8d9598;font-size:34px;line-height:78px;justify-content:center}`,
      `<fit-text w="653"><slot></slot></fit-text>`);
  }
});

customElements.define('action-bar', class extends Base {
  render() {
    return SHEET(`:host{display:flex;flex-direction:column;height:232px;border-top:1px solid #22272b;background:#0b1014}
      .r{display:flex;height:167px}.r>div{flex:none;width:540px;display:flex;align-items:center;font-size:36px;font-weight:500;line-height:44px}
      .d{color:#ff5063;padding-left:138px}.u{color:#21c063;padding-left:161px}.d fit-text{margin-left:28px}.u fit-text{margin-left:24px}
      i{width:347px;height:11px;border-radius:6px;background:#ececec;margin:32px 0 0 362px}`,
      `<div class="r"><div class="d"><svg width="32" height="36" viewBox="0 0 32 36" fill="none" stroke="#ff5063" stroke-width="4" stroke-linejoin="round"><path d="M4.500 4V33.500H27.500V4"/><path d="M2 4H30M11 2.500H21" stroke-linecap="round"/><path d="M12 11.500V25.500M20 11.500V25.500" stroke-width="3.500" stroke-linecap="round"/></svg><fit-text w="202">Delete chat</fit-text></div>
      <div class="u">${ICON.ban(40, '#21c063', 4.2)}<fit-text w="145">Unblock</fit-text></div></div><i></i>`);
  }
});

customElements.define('chat-app', class extends Base {
  render() {
    return SHEET(`:host{display:flex;flex-direction:column;position:relative;width:1080px;height:2400px;background:#0b1014;overflow:hidden}
      status-bar,chat-header,action-bar{flex:none}
      .chat{display:grid;height:1885px}.chat>*{grid-area:1/1;min-height:0;height:1885px}
      .list{display:flex;flex-direction:column;min-width:0}.list>*{flex:none}
      text-message,call-message{margin-top:27px}.tight{margin-top:6px}.close{margin-top:26px}`,
      `<status-bar></status-bar><chat-header></chat-header>
      <div class="chat"><chat-wallpaper></chat-wallpaper><div class="list">
      <encryption-notice></encryption-notice>
      <text-message side="out" read width="305" text="Hlo" tw="67" time="1:04 am" mw="115" tb="10"></text-message>
      <call-message side="in" kind="video" width="453" h="184" text="Video call" hw="178" sub="2 mins" sw="116" time="1:04 am" mw="115"></call-message>
      <text-message side="in" deleted h="97" width="805" text="This message was deleted" tw="527" time="1:06 am" mw="113" tb="6"></text-message>
      <call-message side="out" kind="video" width="448" text="Video call" hw="178" sub="7 mins" sw="114" time="1:07 am" mw="112"></call-message>
      <text-message side="in" deleted h="97" width="792" text="This message was deleted" tw="527" time="1:11 am" mw="101" tb="6"></text-message>
      <call-message side="in" kind="voice" missed width="603" text="Missed voice call" hw="312" sub="Tap to call back" sw="275" time="1:15 am" mw="107"></call-message>
      <text-message side="in" width="351" text="Kya hua" tw="160" time="1:15 am" mw="107"></text-message>
      <text-message side="in" plain class="tight" width="375" text="Bolo bhai" tw="185" time="1:16 am" mw="107"></text-message>
      <call-message side="in" kind="voice" class="close" width="468" text="Voice call" hw="175" sub="43 secs" sw="139" time="1:16 am" mw="107"></call-message>
      <call-message side="in" kind="voice" width="459" text="Voice call" hw="175" sub="41 secs" sw="130" time="1:17 am" mw="106"></call-message>
      <system-note>You blocked this person. Tap to unblock.</system-note>
      </div></div>
      <action-bar></action-bar><assist-bubble></assist-bubble>`);
  }
});

/* Tracks its text so that the line's advance equals the w attribute. */
customElements.define('fit-text', class extends Base {
  render() { return SHEET(':host{display:inline-block;white-space:pre;flex:none}', '<span><slot></slot></span>'); }
  connectedCallback() {
    super.connectedCallback();
    const w = parseFloat(this.a('w'));
    if (!w) return;
    const span = this.shadowRoot.querySelector('span');
    const slot = this.querySelector('slot');
    const text = slot ? slot.assignedNodes().map(n => n.textContent).join('') : this.textContent;
    const now = span.getBoundingClientRect().width;
    span.style.letterSpacing = ((w - now) / text.length).toFixed(3) + 'px';
  }
});
</script>
</body>
</html>
